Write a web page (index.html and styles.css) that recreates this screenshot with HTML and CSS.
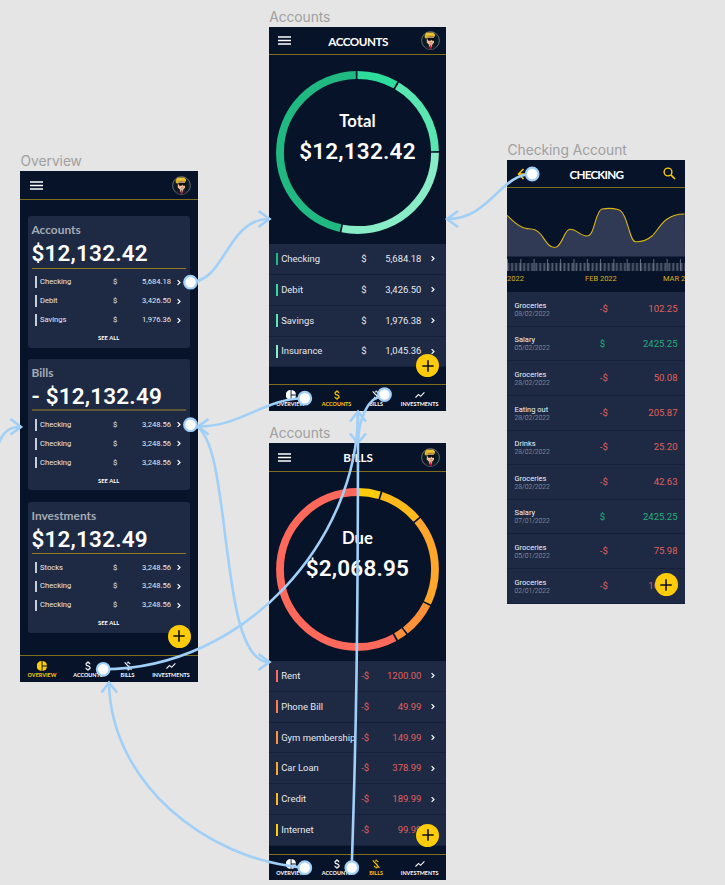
FILE: index.html
```
<!DOCTYPE html>
<html lang="en">
<head>
<meta charset="utf-8">
<title>Finance app flow</title>
<link rel="stylesheet" href="styles.css">
</head>
<body>
<svg class="defs" aria-hidden="true">
  <defs>
    <symbol id="menu" viewBox="0 0 13 9"><path d="M0 1h13M0 4.500h13M0 8h13" stroke="#fff" stroke-width="1.300"/></symbol>
    <symbol id="chev" viewBox="0 0 5 6"><path d="M1.300 .9 3.400 3 1.300 5.100" fill="none" stroke="currentColor" stroke-width="1"/></symbol>
    <symbol id="plus" viewBox="0 0 12 12"><path d="M6 .3v11.400M.3 6h11.400" stroke="#0a1020" stroke-width="1.600"/></symbol>
    <symbol id="pie" viewBox="0 0 10 10"><path d="M4.600 0v10A5 5 0 0 1 4.600 0zM5.500 0A5 5 0 0 1 10 4.500H5.500zM5.500 5.500H10A5 5 0 0 1 5.500 10z" fill="currentColor"/></symbol>
    <symbol id="dollar" viewBox="0 0 6 10"><path d="M3 .2v1.400M3 8.400v1.400M5 3.200C4.900 2.100 4.100 1.600 3 1.600S1 2.200 1 3.200 1.800 4.600 3 4.900 5.100 5.700 5.100 6.800 4.200 8.400 3 8.400.9 7.800.8 6.700" fill="none" stroke="currentColor" stroke-width="1.150"/></symbol>
    <symbol id="nodollar" viewBox="0 0 8 10"><path d="M4.200 .4v1.300M4.200 8.300v1.300M6.200 3.200C6 2.100 5.300 1.700 4.200 1.700c-.6 0-1.100.15-1.400.4M2.100 6.700c.1 1.100.9 1.600 2.100 1.600.7 0 1.300-.2 1.600-.5M.7 1.300l6.800 7.500M3.500 4.700l2 .6" fill="none" stroke="currentColor" stroke-width="1.050"/></symbol>
    <symbol id="trend" viewBox="0 0 10 7"><path d="M.5 6 3.600 2.900 5.600 4.800 9.400 .8" fill="none" stroke="currentColor" stroke-width="1.100"/></symbol>
    <symbol id="avatar" viewBox="0 0 19 19">
      <circle cx="9.500" cy="9.500" r="8.900" fill="#0b1a20" stroke="#8b939f" stroke-width=".7"/>
      <path d="M3.600 15.800 7 14h5.500l3 1.800A8.300 8.300 0 0 1 3.600 15.800z" fill="#1a1f29"/>
      <path d="M8 13.500h3.200l-.3 2.200-1.200 1-1.300-1z" fill="#d9d9de"/>
      <path d="M8.900 14.200h1.500l.3 3-1 .8-1-.8z" fill="#c9192e"/>
      <path d="M5.800 5.500h7.200v6l-1.800 2.300H8L5.800 11.400z" fill="#f0bd98"/>
      <path d="M3.700 6.600V4L5.600 1.500h6.800L14.200 3.800l-.5 2-4-.6-2.900.4-.9 1.600H4z" fill="#e0b321"/>
      <path d="M5.500 3.300 11.500 2.800l1.500 1" stroke="#f6d95e" stroke-width=".8" fill="none"/>
      <path d="M6.300 6.700h7.700v1.400l-.9 1.600h-2l-.8-1.200-.7 1.200H7.500L6.300 8.100z" fill="#0a0c10"/>
      <path d="M9 11.800h2.400" stroke="#a55b48" stroke-width=".7"/>
    </symbol>
  </defs>
</svg>

<main class="canvas">
  <section class="frame overview">
    <h2 class="frame-name">Overview</h2>
    <div class="phone">
      <header class="bar"><svg class="i-menu"><use href="#menu"/></svg><span class="title"></span><svg class="i-avatar"><use href="#avatar"/></svg></header>
      <div class="cards">
        <article class="card">
          <h3>Accounts</h3><p class="sum">$12,132.42</p>
          <ul>
            <li><i></i><span>Checking</span><span>$</span><b>5,684.18</b><svg class="i-chev"><use href="#chev"/></svg></li>
            <li><i></i><span>Debit</span><span>$</span><b>3,426.50</b><svg class="i-chev"><use href="#chev"/></svg></li>
            <li><i></i><span>Savings</span><span>$</span><b>1,976.36</b><svg class="i-chev"><use href="#chev"/></svg></li>
          </ul>
          <a class="all">SEE ALL</a>
        </article>
        <article class="card thick">
          <h3>Bills</h3><p class="sum">- $12,132.49</p>
          <ul>
            <li><i></i><span>Checking</span><span>$</span><b>3,248.56</b><svg class="i-chev"><use href="#chev"/></svg></li>
            <li><i></i><span>Checking</span><span>$</span><b>3,248.56</b><svg class="i-chev"><use href="#chev"/></svg></li>
            <li><i></i><span>Checking</span><span>$</span><b>3,248.56</b><svg class="i-chev"><use href="#chev"/></svg></li>
          </ul>
          <a class="all">SEE ALL</a>
        </article>
        <article class="card">
          <h3>Investments</h3><p class="sum">$12,132.49</p>
          <ul>
            <li><i></i><span>Stocks</span><span>$</span><b>3,248.56</b><svg class="i-chev"><use href="#chev"/></svg></li>
            <li><i></i><span>Checking</span><span>$</span><b>3,248.56</b><svg class="i-chev"><use href="#chev"/></svg></li>
            <li><i></i><span>Checking</span><span>$</span><b>3,248.56</b><svg class="i-chev"><use href="#chev"/></svg></li>
          </ul>
          <a class="all">SEE ALL</a>
        </article>
      </div>
      <nav class="tabs">
        <a class="on"><svg class="i-pie"><use href="#pie"/></svg><span>OVERVIEW</span></a>
        <a><svg class="i-dollar"><use href="#dollar"/></svg><span>ACCOUNTS</span></a>
        <a><svg class="i-nodollar"><use href="#nodollar"/></svg><span>BILLS</span></a>
        <a><svg class="i-trend"><use href="#trend"/></svg><span>INVESTMENTS</span></a>
      </nav>
      <div class="fab"><svg><use href="#plus"/></svg></div>
    </div>
  </section>

  <section class="frame accounts">
    <h2 class="frame-name">Accounts</h2>
    <div class="phone">
      <header class="bar"><svg class="i-menu"><use href="#menu"/></svg><span class="title">ACCOUNTS</span><svg class="i-avatar"><use href="#avatar"/></svg></header>
      <div class="chart">
        <svg class="ring" viewBox="-82.500 -82.500 165 165">
          <g transform="rotate(-90)" fill="none" stroke-width="7.800">
            <circle r="77.500" pathLength="360" stroke="#2edd9b" stroke-dasharray="29.400 330.600" stroke-dashoffset="0"/>
            <circle r="77.500" pathLength="360" stroke="#5ae6b1" stroke-dasharray="58.300 301.700" stroke-dashoffset="-30.700"/>
            <circle r="77.500" pathLength="360" stroke="#88edc7" stroke-dasharray="101.200 258.800" stroke-dashoffset="-90.200"/>
            <circle r="77.500" pathLength="360" stroke="#20b981" stroke-dasharray="166 194" stroke-dashoffset="-192.700"/>
          </g>
        </svg>
        <div class="mid"><strong>Total</strong><em>$12,132.42</em></div>
      </div>
      <ul class="list">
        <li><i class="g1"></i><span>Checking</span><span>$</span><b>5,684.18</b><svg class="i-chev"><use href="#chev"/></svg></li>
        <li><i class="g2"></i><span>Debit</span><span>$</span><b>3,426.50</b><svg class="i-chev"><use href="#chev"/></svg></li>
        <li><i class="g3"></i><span>Savings</span><span>$</span><b>1,976.38</b><svg class="i-chev"><use href="#chev"/></svg></li>
        <li><i class="g4"></i><span>Insurance</span><span>$</span><b>1,045.36</b><svg class="i-chev"><use href="#chev"/></svg></li>
      </ul>
      <nav class="tabs">
        <a><svg class="i-pie"><use href="#pie"/></svg><span>OVERVIEW</span></a>
        <a class="on"><svg class="i-dollar"><use href="#dollar"/></svg><span>ACCOUNTS</span></a>
        <a><svg class="i-nodollar"><use href="#nodollar"/></svg><span>BILLS</span></a>
        <a><svg class="i-trend"><use href="#trend"/></svg><span>INVESTMENTS</span></a>
      </nav>
      <div class="fab"><svg><use href="#plus"/></svg></div>
    </div>
  </section>

  <section class="frame bills">
    <h2 class="frame-name">Accounts</h2>
    <div class="phone">
      <header class="bar"><svg class="i-menu"><use href="#menu"/></svg><span class="title">BILLS</span><svg class="i-avatar"><use href="#avatar"/></svg></header>
      <div class="chart">
        <svg class="ring" viewBox="-82.500 -82.500 165 165">
          <g transform="rotate(-90)" fill="none" stroke-width="7.800">
            <circle r="77.500" pathLength="360" stroke="#ffcc0a" stroke-dasharray="16.600 343.400" stroke-dashoffset="0"/>
            <circle r="77.500" pathLength="360" stroke="#ffb91a" stroke-dasharray="31.600 328.400" stroke-dashoffset="-17.900"/>
            <circle r="77.500" pathLength="360" stroke="#ffa62b" stroke-dasharray="64.800 295.200" stroke-dashoffset="-50.700"/>
            <circle r="77.500" pathLength="360" stroke="#ff9138" stroke-dasharray="25.200 334.800" stroke-dashoffset="-116.700"/>
            <circle r="77.500" pathLength="360" stroke="#ff8e3c" stroke-dasharray="7 353" stroke-dashoffset="-143.100"/>
            <circle r="77.500" pathLength="360" stroke="#ff695b" stroke-dasharray="208.600 151.400" stroke-dashoffset="-151.400"/>
          </g>
        </svg>
        <div class="mid"><strong>Due</strong><em>$2,068.95</em></div>
      </div>
      <ul class="list owed">
        <li><i class="w1"></i><span>Rent</span><span>-$</span><b>1200.00</b><svg class="i-chev"><use href="#chev"/></svg></li>
        <li><i class="w2"></i><span>Phone Bill</span><span>-$</span><b>49.99</b><svg class="i-chev"><use href="#chev"/></svg></li>
        <li><i class="w3"></i><span>Gym membership</span><span>-$</span><b>149.99</b><svg class="i-chev"><use href="#chev"/></svg></li>
        <li><i class="w4"></i><span>Car Loan</span><span>-$</span><b>378.99</b><svg class="i-chev"><use href="#chev"/></svg></li>
        <li><i class="w5"></i><span>Credit</span><span>-$</span><b>189.99</b><svg class="i-chev"><use href="#chev"/></svg></li>
        <li><i class="w6"></i><span>Internet</span><span>-$</span><b>99.99</b><svg class="i-chev"><use href="#chev"/></svg></li>
      </ul>
      <nav class="tabs">
        <a><svg class="i-pie"><use href="#pie"/></svg><span>OVERVIEW</span></a>
        <a><svg class="i-dollar"><use href="#dollar"/></svg><span>ACCOUNTS</span></a>
        <a class="on"><svg class="i-nodollar"><use href="#nodollar"/></svg><span>BILLS</span></a>
        <a><svg class="i-trend"><use href="#trend"/></svg><span>INVESTMENTS</span></a>
      </nav>
      <div class="fab"><svg><use href="#plus"/></svg></div>
    </div>
  </section>

  <section class="frame checking">
    <h2 class="frame-name">Checking Account</h2>
    <div class="phone">
      <header class="bar">
        <svg class="i-back" viewBox="0 0 13 12"><path d="M6.500 1 1.500 6l5 5M1.500 6H12" fill="none" stroke="#ffcc0a" stroke-width="1.500"/></svg>
        <span class="title">CHECKING</span>
        <svg class="i-search" viewBox="0 0 13 13"><circle cx="5" cy="5" r="3.900" fill="none" stroke="#ffcc0a" stroke-width="1.400"/><path d="M7.900 7.900 12 12" stroke="#ffcc0a" stroke-width="1.600"/></svg>
      </header>
      <svg class="history" viewBox="0 0 178 69">
        <path d="M0 27.300C5 31.800 12 40.300 20 40.600 25 41 29 40.500 34 46.500 39 53.500 42 59.500 47.500 59.500 55 59.500 57 41.300 63 41.300 70 41.300 73 48 80 48 88 48 88 23 95 21 100 20.200 107 20.500 111 21.500 121 24 122 53.500 128.500 53.700 134 54 139 53 145 48 152 42 156 26 177.600 26L178 68.500H0z" fill="#313a54"/>
        <path d="M0 27.300C5 31.800 12 40.300 20 40.600 25 41 29 40.500 34 46.500 39 53.500 42 59.500 47.500 59.500 55 59.500 57 41.300 63 41.300 70 41.300 73 48 80 48 88 48 88 23 95 21 100 20.200 107 20.500 111 21.500 121 24 122 53.500 128.500 53.700 134 54 139 53 145 48 152 42 156 26 177.600 26" fill="none" stroke="#d9b514" stroke-width="1.100"/>
      </svg>
      <svg class="ruler" viewBox="0 0 178 12">
        <defs>
          <pattern id="minor" width="1.330" height="12" patternUnits="userSpaceOnUse"><path d="M.35 4v8" stroke="#778091" stroke-width=".55"/></pattern>
          <pattern id="major" width="13.300" height="12" patternUnits="userSpaceOnUse"><path d="M.5 0v12" stroke="#7b8494" stroke-width=".8"/></pattern>
        </defs>
        <rect width="178" height="12" fill="url(#minor)"/><rect width="178" height="12" fill="url(#major)"/>
      </svg>
      <div class="months"><span>2022</span><span>FEB 2022</span><span>MAR 2</span></div>
      <ul class="ledger">
        <li><div><strong>Groceries</strong><time>08/02/2022</time></div><span>-$</span><b>102.25</b></li>
        <li class="in"><div><strong>Salary</strong><time>05/02/2022</time></div><span>$</span><b>2425.25</b></li>
        <li><div><strong>Groceries</strong><time>28/02/2022</time></div><span>-$</span><b>50.08</b></li>
        <li><div><strong>Eating out</strong><time>28/02/2022</time></div><span>-$</span><b>205.87</b></li>
        <li><div><strong>Drinks</strong><time>28/02/2022</time></div><span>-$</span><b>25.20</b></li>
        <li><div><strong>Groceries</strong><time>28/02/2022</time></div><span>-$</span><b>42.63</b></li>
        <li class="in"><div><strong>Salary</strong><time>07/01/2022</time></div><span>$</span><b>2425.25</b></li>
        <li><div><strong>Groceries</strong><time>05/01/2022</time></div><span>-$</span><b>75.98</b></li>
        <li><div><strong>Groceries</strong><time>02/01/2022</time></div><span>-$</span><b>102.25</b></li>
      </ul>
      <div class="fab"><svg><use href="#plus"/></svg></div>
    </div>
  </section>

  <svg class="links" viewBox="0 0 725 885">
    <g fill="none" stroke="#a0cff8" stroke-width="2.600">
      <path d="M190.500 282C225 282 227 219 269 219M258.500 211 269.500 219 258.500 227"/>
      <path d="M532 174C500 174 490 219 447 219M458 211 447 219 458 227"/>
      <path d="M304.800 398.200C265 398 240 427 198 426.500M208.500 419 198 426.500 208.500 434.500"/>
      <path d="M190.500 424.700C235 425 215 662 269 662M258.500 654 269.500 662 258.500 670"/>
      <path d="M103 669.300C245 669 358 540 358 412M350 421.500 358 411.500 366 421.500"/>
      <path d="M384.500 394.500C366 398 359 420 357.700 443M350 433.500 357.700 443 366 433.500"/>
      <path d="M351.700 867.700C356 740 358 640 358 412"/>
      <path d="M304.800 867.700C205 860 111 782 109 683M101.500 692.500 109 682.500 117 692.500"/>
      <path d="M-3 448C3 430 10 427 21 427M10.500 419 21 427 10.500 434.500"/>
    </g>
    <g fill="#fff" stroke="#a0cff8" stroke-width="2.200">
      <circle cx="190.500" cy="282.200" r="6.300"/><circle cx="190.500" cy="424.700" r="6.300"/>
      <circle cx="103.200" cy="669.300" r="6.300"/><circle cx="304.800" cy="398.200" r="6.300"/>
      <circle cx="384.500" cy="394.600" r="6.300"/><circle cx="304.800" cy="867.700" r="6.300"/>
      <circle cx="351.800" cy="867.700" r="6.300"/><circle cx="532.200" cy="174" r="6.300"/>
    </g>
  </svg>
</main>
</body>
</html>
```
FILE: styles.css
```
* { box-sizing: border-box; margin: 0; padding: 0; }
body { background: #e5e5e5; font-family: Roboto, sans-serif; overflow: hidden; }
ul { list-style: none; }
svg { display: block; flex: none; }
b, em, i, strong { font-weight: 400; font-style: normal; }
.defs { position: absolute; width: 0; height: 0; }
.canvas { position: relative; width: 725px; height: 885px; overflow: hidden; }

/* frames on the free canvas */
.frame { position: absolute; width: 177.700px; }
.overview { left: 20px; top: 150px; }
.accounts { left: 268.600px; top: 5.500px; }
.bills { left: 268.600px; top: 422.400px; }
.checking { left: 507px; top: 138.500px; }
.frame-name { height: 21px; padding-left: .6px; font: 400 13.800px/22px Inter, sans-serif; letter-spacing: -.05px; color: #a0a0a0; white-space: nowrap; }
.phone { position: relative; display: flex; flex-direction: column; background: #071329; overflow: hidden; color: #fff; }
.overview .phone { height: 511px; }
.accounts .phone { height: 384.400px; }
.bills .phone { height: 437px; }
.checking .phone { height: 444px; }

/* header */
.bar { display: flex; align-items: center; justify-content: space-between; flex: none; height: 28.500px; padding: .6px 6.500px 0 9.800px; border-bottom: 1px solid #806d19; }
.title { font: 700 11.700px/14px Lato, sans-serif; letter-spacing: -.5px; }
.i-menu { width: 13px; height: 9px; }
.i-avatar { width: 19px; height: 19px; }
.accounts .bar .title { margin-left: 4px; }
.bills .bar .title { margin-left: 4px; letter-spacing: 0; }
.checking .bar .title { letter-spacing: -.8px; }
.i-back { width: 13px; height: 12px; }
.i-search { width: 13px; height: 13px; }
.checking .bar { padding-right: 8.800px; }

/* overview cards */
.cards { display: flex; flex-direction: column; gap: 11.300px; padding: 16.800px 7.600px 0 8px; flex: 1; }
.card { height: 131.400px; border-radius: 3px; background: #1e2a44; padding: 6px 4.300px 0 3.500px; }
.card h3 { font: 700 11.900px/15px Lato, sans-serif; color: #a5aab4; }
.sum { height: 31.300px; font-size: 22.500px; letter-spacing: .18px; font-weight: 600; line-height: 32px; border-bottom: 1px solid #927b18; white-space: nowrap; }
.thick .sum { border-bottom: 2px solid #5d5832; }
.card ul { padding: 4.100px 0 0 3.500px; }
.card li { display: grid; grid-template-columns: 5px 73px 22px 36px 16px; align-items: center; height: 18.950px; font-size: 7.600px; line-height: 10px; color: #e6e8ec; }
.card li i { width: 2px; height: 11.500px; background: #c9cdd6; }
.card li b, .list b { text-align: right; }
.card li .i-chev, .list .i-chev { width: 6px; height: 7px; justify-self: center; color: #fff; }
.all { display: block; text-align: center; font: 700 5.800px/8px Lato, sans-serif; padding-top: 4.500px; }

/* donut charts */
.chart { display: grid; flex: none; height: 189px; padding-top: 14.700px; justify-content: center; align-items: start; }
.ring { grid-area: 1/1; width: 165px; height: 165px; }
.mid { grid-area: 1/1; display: flex; flex-direction: column; align-items: center; padding-top: 41.300px; }
.mid strong { font: 700 16.700px/20px Lato, sans-serif; }
.mid em { margin-top: 5px; font-size: 22.500px; letter-spacing: .2px; font-weight: 600; line-height: 31px; }

/* account rows */
.list { flex: none; }
.list li { display: grid; grid-template-columns: 5.400px 80px 24px 36.200px 24px; align-items: center; height: 30.850px; padding-left: 7.200px; font-size: 9.450px; line-height: 12px; color: #e6e8ec; background: #1e2a44; border-bottom: 1px solid #15203a; white-space: nowrap; }
.list li i { width: 2px; height: 12.500px; }
.owed li span:nth-of-type(2), .owed b { color: #e0605b; }
.g1 { background: #20b981; } .g2 { background: #2edd9b; } .g3 { background: #5ae6b1; } .g4 { background: #88edc7; }
.w1 { background: #ff695b; } .w2 { background: #ff7b4c; } .w3 { background: #ff9138; }
.w4 { background: #ffa62b; } .w5 { background: #ffb91a; } .w6 { background: #ffcc0a; }

/* bottom tabs */
.tabs { display: grid; grid-template-columns: 43px 49px 30px 57px; flex: none; height: 26.700px; margin-top: auto; padding-left: .5px; border-top: 1px solid #806d19; }
.tabs a { display: flex; flex-direction: column; align-items: center; padding-top: 4.500px; font: 700 5.450px/7px Lato, sans-serif; white-space: nowrap; }
.tabs svg { height: 10px; margin-bottom: 1.100px; }
.tabs .on { color: #ffcc0a; }
.i-pie { width: 10px; } .i-dollar { width: 6px; } .i-nodollar { width: 8px; } .i-trend { width: 10px; }

.fab { position: absolute; right: 7px; width: 23px; height: 23px; border-radius: 50%; background: #ffcc0a; display: grid; place-items: center; }
.fab svg { width: 12px; height: 12px; }
.overview .fab { bottom: 34.200px; }
.accounts .fab { bottom: 33.500px; }
.bills .fab { bottom: 33.800px; }
.checking .fab { bottom: 7.500px; }

/* account history */
.history { width: 178px; height: 69px; }
.ruler { width: 178px; height: 12px; margin-top: 2px; }
.months { display: grid; grid-template-columns: 78px 78px 1fr; height: 22.600px; padding-top: 3px; font-size: 7.500px; line-height: 9px; color: #d9b116; white-space: nowrap; }
.ledger li { display: grid; grid-template-columns: 85.300px 30px 1fr; align-items: center; height: 34.580px; padding: 0 7.200px 0 7.500px; background: #1e2a44; border-bottom: 1px solid #15203a; font-size: 9.500px; line-height: 12px; color: #e0605b; }
.ledger div { display: flex; flex-direction: column; padding-top: 1.600px; }
.ledger strong { font-size: 7.500px; line-height: 8px; color: #f1f2f5; }
.ledger time { font-size: 6.750px; line-height: 8px; font-weight: 300; color: #a7adba; }
.ledger b { text-align: right; }
.ledger .in { color: #22b07d; }

.links { position: absolute; left: 0; top: 0; width: 725px; height: 885px; pointer-events: none; }
```
